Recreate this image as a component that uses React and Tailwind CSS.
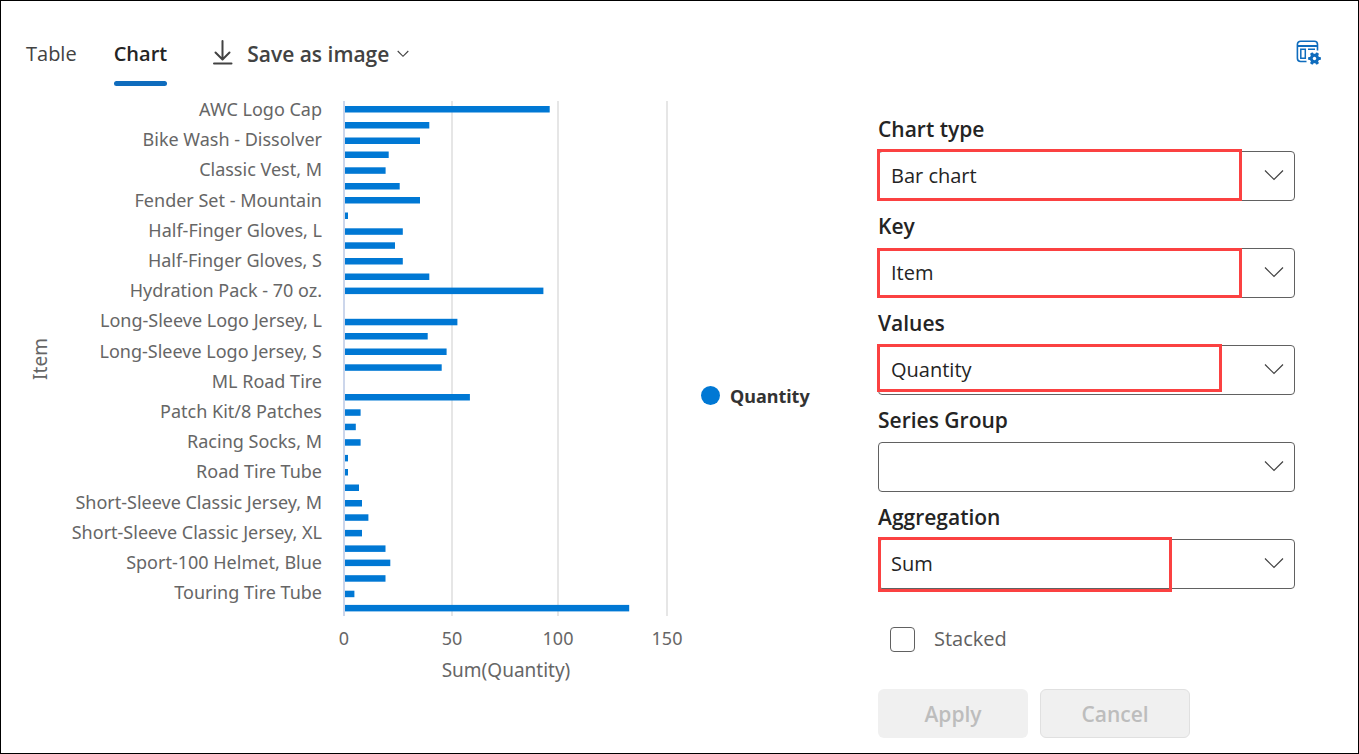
import { useState } from "react";

const rows = [
  { y: 109, end: 549.7, label: "AWC Logo Cap" },
  { y: 125, end: 429.3 },
  { y: 140.5, end: 420, label: "Bike Wash - Dissolver" },
  { y: 154.5, end: 388.7 },
  { y: 170.3, end: 385.6, label: "Classic Vest, M" },
  { y: 186, end: 399.7 },
  { y: 200, end: 420, label: "Fender Set - Mountain" },
  { y: 215.5, end: 348 },
  { y: 231.3, end: 402.8, label: "Half-Finger Gloves, L" },
  { y: 245.3, end: 395 },
  { y: 261, end: 402.8, label: "Half-Finger Gloves, S" },
  { y: 276.5, end: 429.3 },
  { y: 290.6, end: 543.4, label: "Hydration Pack - 70 oz." },
  { y: 306, end: 344 },
  { y: 321.8, end: 457.4, label: "Long-Sleeve Logo Jersey, L" },
  { y: 336, end: 427.7 },
  { y: 351.5, end: 446.6, label: "Long-Sleeve Logo Jersey, S" },
  { y: 367.3, end: 441.7 },
  { y: 382, end: 344, label: "ML Road Tire" },
  { y: 397, end: 469.9 },
  { y: 412.3, end: 360.6, label: "Patch Kit/8 Patches" },
  { y: 426.7, end: 355.8 },
  { y: 442.2, end: 360.6, label: "Racing Socks, M" },
  { y: 457.9, end: 348 },
  { y: 472, end: 348, label: "Road Tire Tube" },
  { y: 487.5, end: 359 },
  { y: 503, end: 362, label: "Short-Sleeve Classic Jersey, M" },
  { y: 517.3, end: 368.4 },
  { y: 532.9, end: 362, label: "Short-Sleeve Classic Jersey, XL" },
  { y: 548.4, end: 385.5 },
  { y: 562.6, end: 390.3, label: "Sport-100 Helmet, Blue" },
  { y: 578.2, end: 385.5 },
  { y: 593.7, end: 354.4, label: "Touring Tire Tube" },
  { y: 607.9, end: 629.2 },
];

const ticks = [
  { x: 344, label: "0" },
  { x: 452, label: "50" },
  { x: 558, label: "100" },
  { x: 667, label: "150" },
];

const fields = [
  { id: "chart-type", label: "Chart type", value: "Bar chart", mark: "-left-px -top-0.5 h-[52px] w-[365px]" },
  { id: "key", label: "Key", value: "Item", mark: "-left-px top-0 h-[50px] w-[365px]" },
  { id: "values", label: "Values", value: "Quantity", mark: "-left-px -top-px h-12 w-[345px]" },
  { id: "series-group", label: "Series Group", value: "", mark: "" },
  { id: "aggregation", label: "Aggregation", value: "Sum", mark: "left-0 -top-0.5 h-[55px] w-[294px]" },
];

function DownloadIcon() {
  return (
    <svg width="20" height="28" viewBox="0 0 20 28" fill="none" stroke="#424242" strokeWidth="2" strokeLinecap="round" strokeLinejoin="round">
      <path d="M9.500 1V19M2.500 12.500l7 7 7-7M1 23.500h17.500" />
    </svg>
  );
}

function ChartSettingsIcon() {
  return (
    <svg width="26" height="26" viewBox="0 0 26 26" fill="none" stroke="#0f6cbd">
      <path strokeWidth="1.6" d="M10.5 21.5H4.6A3.2 3.2 0 0 1 1.4 18.300V4.400A3.200 3.200 0 0 1 4.600 1.200H18.300A3.200 3.200 0 0 1 21.500 4.400V10.500" />
      <path strokeWidth="2" d="M1.500 6H21.500" />
      <path strokeWidth="1.500" d="M4.800 9.300H9.300V18.200H4.800ZM12 9.300H19" />
      <g stroke="none" fill="#0f6cbd">
        <circle cx="18.500" cy="18.500" r="4.700" />
        <g>
          <rect x="16.900" y="12.100" width="3.200" height="12.800" rx=".8" transform="rotate(30 18.500 18.500)" />
          <rect x="16.900" y="12.100" width="3.200" height="12.800" rx=".8" transform="rotate(90 18.500 18.500)" />
          <rect x="16.900" y="12.100" width="3.200" height="12.800" rx=".8" transform="rotate(150 18.500 18.500)" />
        </g>
        <circle cx="18.500" cy="18.500" r="1.700" fill="#fff" />
      </g>
    </svg>
  );
}

function BarChart() {
  return (
    <svg viewBox="25 92 825 600" className="h-auto w-full font-['Noto_Sans',sans-serif]" role="img" aria-label="Sum of quantity by item">
      {ticks.map((t, i) => (
        <g key={t.label}>
          <rect x={t.x - 1} y="101" width="2" height="515" fill={i === 0 ? "#ccd6eb" : "#e6e6e6"} />
          <text x={t.x} y="645" textAnchor="middle" fontSize="18" fill="#666">{t.label}</text>
        </g>
      ))}
      {rows.map((r, i) => (
        <g key={r.y}>
          {r.end > 344 && (
            <rect x="345" y={r.y - 3} width={r.end - 345} height="6.500" fill="#0078d4" />
          )}
          {r.label && (
            <text x="322" y={Math.round(116 + i * 15.1)} textAnchor="end" fontSize="18" fill="#666">{r.label}</text>
          )}
        </g>
      ))}
      <text x="506" y="677" textAnchor="middle" fontSize="19" fill="#666">Sum(Quantity)</text>
      <text transform="translate(47 359) rotate(-90)" textAnchor="middle" fontSize="19" fill="#666">Item</text>
      <circle cx="710.500" cy="395.500" r="9.500" fill="#0078d4" />
      <text x="730" y="403" fontSize="18" fontWeight="700" fill="#333">Quantity</text>
    </svg>
  );
}

function Field({ id, label, value, mark }) {
  return (
    <div className="flex flex-col gap-2">
      <label htmlFor={id} className="text-[21px]/[27px] font-semibold text-[#242424]">{label}</label>
      <div className="relative">
        <select id={id} defaultValue={value} className="block h-[50px] w-full appearance-none rounded border border-[#616161] bg-white pl-3 pr-14 text-xl text-[#242424]">
          <option value={value}>{value}</option>
        </select>
        <svg className="pointer-events-none absolute right-[11px] top-[18px]" width="20" height="12" viewBox="0 0 20 12" fill="none" stroke="#424242" strokeWidth="1.200">
          <path d="M1 1.500l9 9 9-9" />
        </svg>
        {mark && <span className={"pointer-events-none absolute border-3 border-[#fb4141] " + mark} />}
      </div>
    </div>
  );
}

export default function App() {
  const [tab, setTab] = useState("Chart");
  return (
    <div className="min-h-screen border border-black bg-white font-['Open_Sans',sans-serif] text-xl text-[#424242]">
      <header className="flex h-[91px] items-start justify-between pl-[25px] pr-9 pt-[39px]">
        <div className="flex items-start">
          <nav className="flex gap-[37px]">
            {["Table", "Chart"].map((name) => (
              <button
                key={name}
                type="button"
                onClick={() => setTab(name)}
                className={
                  tab === name
                    ? "flex flex-col gap-[13px] text-xl/7 font-semibold text-[#242424]"
                    : "flex flex-col gap-[13px] text-xl/7 text-[#424242]"
                }
              >
                {name}
                <span className={tab === name ? "h-[5px] w-full rounded-full bg-[#0f6cbd]" : "h-[5px] w-full"} />
              </button>
            ))}
          </nav>
          <button type="button" className="ml-[46px] flex items-center text-[21px]/7 font-semibold">
            <DownloadIcon />
            <span className="ml-[14px]">Save as image</span>
            <svg className="ml-2" width="12" height="8" viewBox="0 0 12 8" fill="none" stroke="#424242" strokeWidth="1.100">
              <path d="M.7 1l5.300 5.300L11.300 1" />
            </svg>
          </button>
        </div>
        <button type="button" aria-label="Chart settings">
          <ChartSettingsIcon />
        </button>
      </header>
      <main className="flex items-start gap-7 pl-6 pr-[63px]">
        <section className="min-w-0 flex-1">
          <BarChart />
        </section>
        <form className="w-[417px] shrink-0 pb-[14px] pt-6">
          <div className="flex flex-col gap-3">
            {fields.map((f) => (
              <Field key={f.id} {...f} />
            ))}
          </div>
          <div className="mt-9 flex items-center gap-[19px] pl-3">
            <input id="stacked" type="checkbox" className="size-[25px] appearance-none rounded-sm border border-[#616161] bg-white" />
            <label htmlFor="stacked" className="text-xl/7 text-[#616161]">Stacked</label>
          </div>
          <div className="mt-9 flex gap-3">
            <button type="button" disabled className="h-[49px] w-[150px] rounded-md bg-[#f0f0f0] text-[21px]/7 font-semibold text-[#bdbdbd]">Apply</button>
            <button type="button" disabled className="h-[49px] w-[150px] rounded-md border border-[#e0e0e0] bg-[#f0f0f0] text-[21px]/7 font-semibold text-[#bdbdbd]">Cancel</button>
          </div>
        </form>
      </main>
    </div>
  );
}
